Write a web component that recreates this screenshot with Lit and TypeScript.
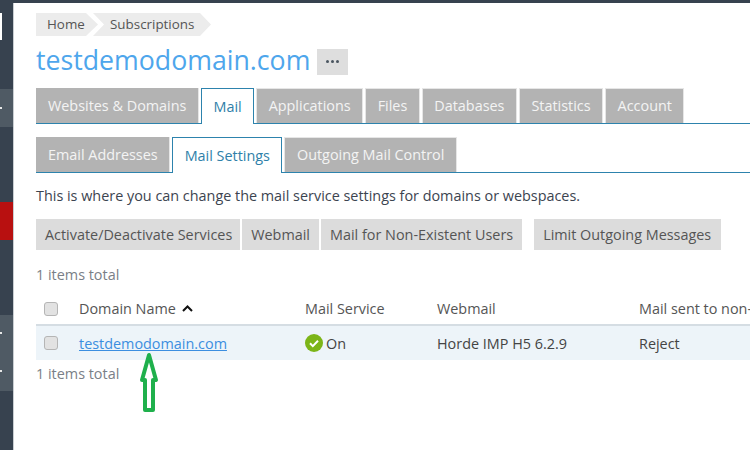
import { LitElement, html, css, svg } from "lit";
import { customElement } from "lit/decorators.js";

@customElement("app-root")
export class AppRoot extends LitElement {
  static styles = css`
    :host { display: block; width: 750px; height: 450px; overflow: hidden; position: relative; background: #fff;
      font-family: "Open Sans", sans-serif; font-size: 14.4px; color: #444; }
    * { box-sizing: border-box; }
    .topbar { height: 3px; background: #37424f; }
    .page { display: flex; height: 447px; }
    .side { width: 14px; flex: none; background: #37424f; border-right: 1px solid #c9ced2; display: flex; flex-direction: column; }
    .s-logo { height: 27px; margin-top: 10px; background: #fff; width: 2px; }
    .s-a { height: 49px; }
    .s-lite { background: #4f5a64; position: relative; }
    .s-red { background: #b81010; }
    .mark { position: absolute; left: 0; width: 2px; height: 2px; background: #e8e8e8; }
    .main { flex: 1; min-width: 0; padding: 10px 0 0 22px; overflow: hidden; }
    .crumbs { display: flex; height: 23px; width: 175px; }
    .crumb { display: flex; align-items: center; height: 23px; background: #ececec; font-size: 13.4px; color: #555; padding-bottom: 2px; }
    .c1 { width: 62px; padding-left: 11px; clip-path: polygon(0 0, 50px 0, 62px 50%, 50px 100%, 0 100%); }
    .c2 { width: 118px; margin-left: -5px; padding-left: 17px; clip-path: polygon(0 0, 107px 0, 118px 50%, 107px 100%, 0 100%, 11px 50%); }
    .title-row { display: flex; align-items: center; gap: 7px; height: 30px; margin-top: 9px; }
    h1 { margin: 0; font-size: 26.7px; font-weight: 400; color: #4ea6ec; line-height: 30px; }
    .more { width: 31px; height: 26px; margin-top: 3px; background: #dedede; display: flex; align-items: center; justify-content: center; gap: 2px; }
    .more i { width: 3px; height: 3px; border-radius: 50%; background: #4a5560; }
    .tabs { display: flex; gap: 2px; border-bottom: 1px solid #2d83ad; height: 36px; margin-top: 13px; }
    .tabs.sub { margin-top: 13px; }
    .tab { height: 35px; padding: 1px 11.5px 0; background: #b3b3b3; border: 1px solid #e6e6e6; border-bottom: 0; color: #f4f4f4; display: flex; align-items: center; white-space: nowrap; line-height: 1; }
    .tab.first { border-left: 0; border-top: 0; padding-left: 12px; }
    .tab.on { background: #fff; color: #2f7fa9; border: 1px solid #2d83ad; border-bottom: 0; height: 36px; margin-bottom: -1px; }
    .desc { margin: 0; height: 20px; line-height: 20px; margin-top: 13px; color: #3c4450; }
    .btns { display: flex; gap: 2px; margin-top: 13px; height: 31px; }
    .btn { background: #dcdcdc; color: #555; padding: 0 9px; display: flex; align-items: center; white-space: nowrap; }
    .btn.lead { padding-right: 8px; }
    .btn.sep { margin-left: 10px; padding-right: 10px; }
    .total { color: #7a8087; height: 20px; line-height: 20px; }
    .t1 { margin-top: 15px; }
    .row { display: grid; grid-template-columns: 43px 226px 132px 202px 160px; width: 763px; align-items: center; white-space: nowrap; }
    .head { height: 33px; margin-top: 8px; border-bottom: 2px solid #d5dde3; color: #555; }
    .body { height: 34px; background: #edf4f9; color: #444; }
    .cb { width: 14px; height: 14px; margin-left: 8px; background: #e2e2e2; border: 1px solid #b5b5b5; border-radius: 3px; }
    .sort { display: inline-block; margin-left: 6px; vertical-align: 2px; }
    a { color: #3b8ee0; text-decoration: underline; }
    .on-cell { display: flex; align-items: center; gap: 3px; }
    .t2 { margin-top: 4px; }
    .arrow { position: absolute; left: 136px; top: 349px; }
  `;

  render() {
    const tabs = ["Websites & Domains", "Mail", "Applications", "Files", "Databases", "Statistics", "Account"];
    const subs = ["Email Addresses", "Mail Settings", "Outgoing Mail Control"];
    return html`
      <div class="topbar"></div>
      <div class="page">
        <div class="side">
          <div class="s-logo"></div>
          <div class="s-a"></div>
          <div class="s-lite" style="height:38px"><span class="mark" style="top:18px"></span></div>
          <div style="height:75px"></div>
          <div class="s-red" style="height:38px"></div>
          <div style="height:75px"></div>
          <div class="s-lite" style="height:76px">
            <span class="mark" style="top:17px"></span><span class="mark" style="top:55px"></span>
          </div>
        </div>
        <div class="main">
          <div class="crumbs">
            <div class="crumb c1">Home</div>
            <div class="crumb c2">Subscriptions</div>
          </div>
          <div class="title-row">
            <h1>testdemodomain.com</h1>
            <div class="more"><i></i><i></i><i></i></div>
          </div>
          <div class="tabs">
            ${tabs.map((t, i) => html`<div class="tab ${i === 1 ? "on" : ""} ${i === 0 ? "first" : ""}">${t}</div>`)}
          </div>
          <div class="tabs sub">
            ${subs.map((t, i) => html`<div class="tab ${i === 1 ? "on" : ""} ${i === 0 ? "first" : ""}">${t}</div>`)}
          </div>
          <p class="desc">This is where you can change the mail service settings for domains or webspaces.</p>
          <div class="btns">
            <div class="btn lead">Activate/Deactivate Services</div>
            <div class="btn">Webmail</div>
            <div class="btn">Mail for Non-Existent Users</div>
            <div class="btn sep">Limit Outgoing Messages</div>
          </div>
          <div class="total t1">1 items total</div>
          <div class="row head">
            <div><div class="cb"></div></div>
            <div>Domain Name<svg class="sort" width="11" height="7" viewBox="0 0 11 7"><path d="M1 6l4.500-4.500L10 6" fill="none" stroke="#111" stroke-width="2"/></svg></div>
            <div>Mail Service</div>
            <div>Webmail</div>
            <div>Mail sent to non-existent</div>
          </div>
          <div class="row body">
            <div><div class="cb"></div></div>
            <div><a>testdemodomain.com</a></div>
            <div class="on-cell">
              <svg width="18" height="18" viewBox="0 0 18 18"><circle cx="9" cy="9" r="9" fill="#7cb518"/><path d="M5 9.300l2.800 2.800L13 6.700" fill="none" stroke="#fff" stroke-width="2"/></svg>
              <span>On</span>
            </div>
            <div>Horde IMP H5 6.2.9</div>
            <div>Reject</div>
          </div>
          <div class="total t2">1 items total</div>
        </div>
      </div>
      <svg class="arrow" width="26" height="66" viewBox="0 0 26 66">
        ${svg`<path d="M13 6L20 31H17V61H9V31H6Z" fill="#fff" stroke="#1fb04c" stroke-width="4" stroke-linejoin="round"/>`}
      </svg>
    `;
  }
}
